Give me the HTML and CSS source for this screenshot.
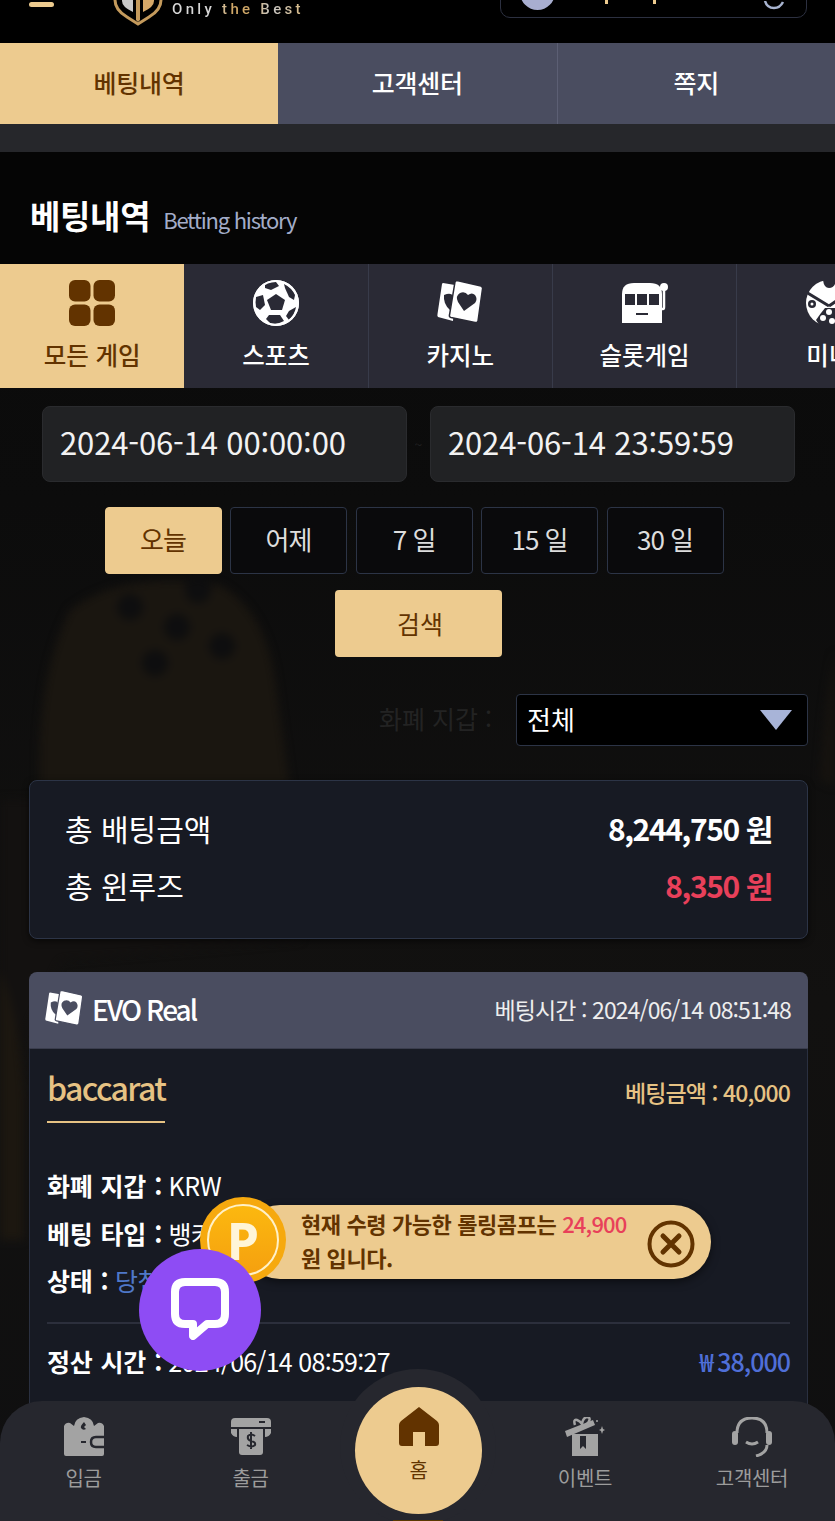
FILE: index.html
```html
<!DOCTYPE html>
<html lang="ko">

<head>
  <meta charset="UTF-8">
  <meta name="viewport" content="width=device-width, initial-scale=1.0">
  <title>베팅내역</title>
  <link rel="stylesheet" href="styles.css">
</head>

<body>
  <div class="page">
    <!-- 배경 주사위 -->
    <svg class="bg-dice" viewBox="0 0 835 1521" aria-hidden="true">
      <path d="M70 610 Q120 570 220 585 Q265 610 275 680 L290 790 L40 790 Q35 680 70 610Z" fill="#1a1610"></path>
      <g fill="#0e0e0f">
        <circle cx="130" cy="607" r="13"></circle>
        <circle cx="198" cy="590" r="13"></circle>
        <circle cx="177" cy="627" r="13"></circle>
        <circle cx="222" cy="646" r="13"></circle>
        <circle cx="155" cy="663" r="13"></circle>
      </g>
      <path d="M845 610 Q825 680 820 780 L845 790Z" fill="#16130f"></path>
      <path d="M-10 800 L290 790 L300 940 L60 960 L-10 1100Z" fill="#131110"></path>
      <path d="M-10 950 Q20 1000 24 1100 L24 1240 L-10 1240Z" fill="#1c1710"></path>
    </svg>

    <header class="top-bar">
      <span class="menu-bar"></span>
      <div class="logo">
        <svg class="logo-mark" viewBox="0 0 50 50" aria-hidden="true">
          <path d="M2 0 V10 Q2 20 14 27 L25 34 L36 27 Q48 20 48 10 V0" fill="none" stroke="#c49a5c" stroke-width="3"></path>
          <path d="M9 0 V11 Q9 17 20 22 V0Z" fill="#c9c9c9"></path>
          <path d="M30 0 V22 Q41 17 41 11 V0Z" fill="#d6a868"></path>
          <path d="M23 0 H27 V30 L25 32 L23 30Z" fill="#c49a5c"></path>
        </svg>
        <span class="logo-text">Only the Best</span>
      </div>
      <div class="wallet">
        <span class="wallet-avatar"></span>
        <span class="wallet-tick"></span>
        <span class="wallet-tick"></span>
        <svg class="wallet-refresh" viewBox="0 0 22 10" aria-hidden="true">
          <path d="M2 0 Q4 7 11 7 Q17 7 20 1" fill="none" stroke="#a8b4d0" stroke-width="2.5"></path>
        </svg>
      </div>
    </header>

    <nav class="main-tabs">
      <a class="main-tab active">베팅내역</a>
      <a class="main-tab">고객센터</a>
      <a class="main-tab">쪽지</a>
    </nav>
    <div class="band"></div>

    <h1 class="title">베팅내역 <small>Betting history</small></h1>

    <div class="game-tabs">
      <a class="game-tab active">
        <svg class="game-icon" viewBox="0 0 46 46" aria-hidden="true">
          <rect x="0" y="0" width="21.5" height="21.5" rx="6" fill="#623300"></rect>
          <rect x="24.5" y="0" width="21.5" height="21.5" rx="6" fill="#623300"></rect>
          <rect x="0" y="24.5" width="21.5" height="21.5" rx="6" fill="#623300"></rect>
          <rect x="24.5" y="24.5" width="21.5" height="21.5" rx="6" fill="#623300"></rect>
        </svg>
        모든 게임
      </a>
      <a class="game-tab">
        <svg class="game-icon" viewBox="0 0 46 46" aria-hidden="true">
          <circle cx="23" cy="23" r="23" fill="#fff"></circle>
          <g fill="#2a2a35">
            <path d="M23 14 L32 20 L29 30 L18 30 L14 20Z"></path>
            <path d="M12 4 Q17 1 23 2 L26 6 L18 10 L12 8Z"></path>
            <path d="M31 4 Q39 8 42 15 L41 20 L36 17 L32 8Z"></path>
            <path d="M3 17 L10 15 L12 25 L7 30 L3 27Q2 22 3 17Z"></path>
            <path d="M16 35 L27 35 L31 41 Q24 45 17 43 L13 39Z"></path>
            <path d="M36 31 L43 27 Q42 34 36 40 L33 36Z"></path>
          </g>
          <circle cx="23" cy="23" r="22" fill="none" stroke="#fff" stroke-width="2"></circle>
        </svg>
        스포츠
      </a>
      <a class="game-tab">
        <svg class="game-icon" viewBox="0 0 46 46" aria-hidden="true">
          <path d="M6 3 L18 5 L16 41 L1 37 Q0 36 0.5 34 L5 4 Q5.5 3 6 3Z" fill="#fff"></path>
          <path d="M7 15 Q14 12 16 16 L13 30 Q6 24 7 15Z" fill="#2a2a35"></path>
          <path d="M20 0.5 L44 6 Q46 7 45.5 9 L41 41 Q40 43 38 42.5 L14 37.5 Q12 37 12.5 35 L18 2 Q18.5 0.5 20 0.5Z" fill="#fff" stroke="#2a2a35" stroke-width="1.5"></path>
          <path d="M27 31 L21 22 Q18 16 23 13 Q28 11 31 15 Q35 12 38 15 Q41 19 38 23Z" fill="#2a2a35"></path>
        </svg>
        카지노
      </a>
      <a class="game-tab">
        <svg class="game-icon" viewBox="0 0 46 46" aria-hidden="true">
          <path d="M0 43 V14 Q0 3 12 3 H28 Q40 3 40 14 V43Z" fill="#fff"></path>
          <rect x="3" y="14" width="10" height="11" fill="#2a2a35"></rect>
          <rect x="15" y="14" width="10" height="11" fill="#2a2a35"></rect>
          <rect x="27" y="14" width="10" height="11" fill="#2a2a35"></rect>
          <rect x="14" y="33" width="12" height="2" fill="#2a2a35"></rect>
          <path d="M39 29 H41 Q42 29 42 27 V10" fill="none" stroke="#fff" stroke-width="2.5"></path>
          <circle cx="42" cy="7" r="4" fill="#fff"></circle>
        </svg>
        슬롯게임
      </a>
      <a class="game-tab">
        <svg class="game-icon" viewBox="0 0 46 46" aria-hidden="true">
          <circle cx="23" cy="23" r="23" fill="#fff"></circle>
          <path d="M17 0 Q18 8 23 8 Q29 8 30 0Z" fill="#2a2a35"></path>
          <path d="M0 12 L23 26 M23 26 L46 10" stroke="#2a2a35" stroke-width="3"></path>
          <circle cx="6" cy="24" r="4" fill="#2a2a35"></circle>
          <circle cx="6" cy="24" r="1.5" fill="#fff"></circle>
          <path d="M10 40 Q14 34 19 28 L31 28 L38 46 L14 46Z" fill="#2a2a35"></path>
          <circle cx="23" cy="32" r="3" fill="#fff"></circle>
          <circle cx="17" cy="38" r="3" fill="#fff"></circle>
          <circle cx="26" cy="41" r="3" fill="#fff"></circle>
        </svg>
        미니
      </a>
    </div>

    <div class="date-row">
      <div class="date-input">2024-06-14 00:00:00</div>
      <span class="date-sep">~</span>
      <div class="date-input">2024-06-14 23:59:59</div>
    </div>

    <div class="quick-row">
      <button class="quick-btn active">오늘</button>
      <button class="quick-btn">어제</button>
      <button class="quick-btn">7 일</button>
      <button class="quick-btn">15 일</button>
      <button class="quick-btn">30 일</button>
    </div>

    <button class="search-btn">검색</button>

    <div class="currency-row">
      <span class="currency-label">화폐 지갑 :</span>
      <div class="currency-select">
        전체
        <svg class="select-arrow" viewBox="0 0 32 20" aria-hidden="true">
          <path d="M0 0 H32 L16 20Z" fill="#a8b4d8"></path>
        </svg>
      </div>
    </div>

    <section class="summary">
      <div class="summary-line"><span>총 배팅금액</span><b>8,244,750 원</b></div>
      <div class="summary-line"><span>총 윈루즈</span><b class="red">8,350 원</b></div>
    </section>

    <section class="bet-card">
      <div class="bet-head">
        <div class="bet-game">
          <svg class="bet-game-icon" viewBox="0 0 46 46" aria-hidden="true">
            <path d="M6 3 L18 5 L16 41 L1 37 Q0 36 0.5 34 L5 4 Q5.5 3 6 3Z" fill="#fff"></path>
            <path d="M7 15 Q14 12 16 16 L13 30 Q6 24 7 15Z" fill="#4a4d60"></path>
            <path d="M20 0.5 L44 6 Q46 7 45.5 9 L41 41 Q40 43 38 42.5 L14 37.5 Q12 37 12.5 35 L18 2 Q18.5 0.5 20 0.5Z" fill="#fff" stroke="#4a4d60" stroke-width="1.5"></path>
            <path d="M27 31 L21 22 Q18 16 23 13 Q28 11 31 15 Q35 12 38 15 Q41 19 38 23Z" fill="#4a4d60"></path>
          </svg>
          EVO Real
        </div>
        <div class="bet-time">베팅시간 : 2024/06/14 08:51:48</div>
      </div>
      <div class="bet-body">
        <div class="bet-top">
          <div class="bet-name">baccarat</div>
          <div class="bet-amount">베팅금액 : 40,000</div>
        </div>
        <ul class="bet-info">
          <li><b>화폐 지갑 :</b> KRW</li>
          <li><b>베팅 타입 :</b> 뱅커</li>
          <li><b>상태 :</b> <span class="blue">당첨</span></li>
        </ul>
        <div class="bet-foot">
          <div><b>정산 시간 :</b> 2024/06/14 08:59:27</div>
          <div class="bet-win">₩ 38,000</div>
        </div>
      </div>
    </section>

    <!-- 롤링콤프 알림 -->
    <div class="comp-notice">
      <span class="coin"><span class="coin-face">P</span></span>
      <p>현재 수령 가능한 롤링콤프는 <em>24,900</em> 원 입니다.</p>
      <svg class="comp-close" viewBox="0 0 48 48" aria-hidden="true">
        <circle cx="24" cy="24" r="21.5" fill="none" stroke="#623300" stroke-width="4"></circle>
        <path d="M16 16 L32 32 M32 16 L16 32" stroke="#623300" stroke-width="5" stroke-linecap="round"></path>
      </svg>
    </div>

    <!-- 채팅 버튼 -->
    <button class="chat-btn" aria-label="채팅">
      <svg viewBox="0 0 58 62" aria-hidden="true">
        <path d="M14 4 H44 Q54 4 54 14 V36 Q54 46 44 46 H36 L22 58 V46 H14 Q4 46 4 36 V14 Q4 4 14 4Z" fill="none" stroke="#fff" stroke-width="8" stroke-linejoin="round"></path>
      </svg>
    </button>

    <nav class="bottom-nav">
      <a class="nav-item">
        <svg class="nav-icon" viewBox="0 0 40 40" aria-hidden="true">
          <path d="M0 9 Q2 5 6 6 L10 9 Q11 1 20 0 Q29 1 30 9 L34 6 Q38 5 40 9 V37 Q40 39 38 39 H2 Q0 39 0 37Z" fill="#a3a3a3"></path>
          <path d="M41 20 H32 Q27 20 27 25 Q27 30 32 30 H41" fill="none" stroke="#26272e" stroke-width="2.5"></path>
          <rect x="17" y="24" width="5" height="2" fill="#26272e"></rect>
          <path d="M20 5 Q16 9 17 11 Q19 14 22 12 L20 10 L22 8Z" fill="#26272e"></path>
        </svg>
        입금
      </a>
      <a class="nav-item">
        <svg class="nav-icon" viewBox="0 0 40 40" aria-hidden="true">
          <path d="M0 5 Q0 1 4 1 H36 Q40 1 40 5 V10 H0Z" fill="#a3a3a3"></path>
          <rect x="28" y="4" width="6" height="2" fill="#26272e"></rect>
          <path d="M0 12 H6 V20 Q2 20 0 16Z M40 12 H34 V20 Q38 20 40 16Z" fill="#a3a3a3"></path>
          <path d="M8 12 H32 V35 Q32 38 29 38 H11 Q8 38 8 35Z" fill="#a3a3a3"></path>
          <path d="M24 19 Q20 16 17 19 Q16 23 20 24 Q25 25 24 28 Q21 31 16 28 M20 15 V32" fill="none" stroke="#26272e" stroke-width="2"></path>
        </svg>
        출금
      </a>
      <a class="nav-item home">
        <svg class="nav-icon" viewBox="0 0 40 40" aria-hidden="true">
          <path d="M20 0 L38 14 Q40 16 40 18 V36 Q40 39 37 39 H26 V25 H14 V39 H3 Q0 39 0 36 V18 Q0 16 2 14Z" fill="#623300"></path>
        </svg>
        홈
      </a>
      <a class="nav-item">
        <svg class="nav-icon" viewBox="0 0 40 40" aria-hidden="true">
          <path d="M7 17 H33 V39 H7Z" fill="#a3a3a3"></path>
          <path d="M0 14 L28 3 L30 8 L2 20Z" fill="#a3a3a3"></path>
          <path d="M10 8 Q8 2 12 3 Q15 4 17 7 Q18 0 23 0 Q27 2 21 8" fill="none" stroke="#a3a3a3" stroke-width="2.5"></path>
          <path d="M15 19 V32 L18 29 L21 32 V19" fill="#26272e"></path>
          <path d="M37 9 L38 12 L40 13 L38 14 L37 17 L36 14 L34 13 L36 12Z" fill="#a3a3a3"></path>
          <circle cx="32" cy="4" r="1" fill="#a3a3a3"></circle>
        </svg>
        이벤트
      </a>
      <a class="nav-item">
        <svg class="nav-icon" viewBox="0 0 40 40" aria-hidden="true">
          <path d="M5 16 Q5 1 20 1 Q35 1 35 16" fill="none" stroke="#a3a3a3" stroke-width="3"></path>
          <rect x="0" y="14" width="6" height="14" rx="3" fill="#a3a3a3"></rect>
          <rect x="34" y="14" width="6" height="14" rx="3" fill="#a3a3a3"></rect>
          <path d="M35 28 Q35 36 24 39" fill="none" stroke="#a3a3a3" stroke-width="3"></path>
          <path d="M14 25 Q20 29 26 25" fill="none" stroke="#a3a3a3" stroke-width="3"></path>
        </svg>
        고객센터
      </a>
      <span class="nav-mark"></span>
    </nav>
  </div>
</body>

</html>
```

FILE: styles.css
```css
* {
  box-sizing: border-box;
}

body {
  margin: 0;
  background: #0b0b0c;
  font-family: "Noto Sans CJK KR", "Noto Sans", sans-serif;
  color: #fff;
}

.page {
  position: relative;
  width: 835px;
  height: 1521px;
  overflow: hidden;
  display: flex;
  flex-direction: column;
  background: linear-gradient(#090909 0, #0c0c0c 500px, #121110 1000px, #0f0f10 1521px);
}

.bg-dice {
  position: absolute;
  top: 0;
  left: 0;
  width: 835px;
  height: 1521px;
  filter: blur(4px);
}

/* 상단 헤더 - 위쪽은 스크롤로 잘린 상태 */
.top-bar {
  position: relative;
  flex: none;
  height: 43px;
  background: #000;
  overflow: hidden;
}

.menu-bar {
  position: absolute;
  top: 2px;
  left: 29px;
  width: 25px;
  height: 5px;
  border-radius: 3px;
  background: #edcb8f;
}

.logo {
  position: absolute;
  top: 0;
  left: 113px;
  display: flex;
  align-items: flex-start;
}

.logo-mark {
  width: 50px;
  height: 50px;
  margin-top: -10px;
}

.logo-text {
  margin: -1px 0 0 9px;
  font-family: "Roboto", sans-serif;
  font-size: 15px;
  line-height: 20px;
  font-weight: 500;
  letter-spacing: 3.3px;
  color: transparent;
  background: linear-gradient(90deg, #d8d8d8 0, #d8d8d8 30%, #d0a868 45%, #d0a868 60%, #c8c8c8 75%, #d8b880 100%);
  background-clip: text;
  -webkit-background-clip: text;
}

.wallet {
  position: absolute;
  top: -30px;
  left: 500px;
  width: 307px;
  height: 48px;
  border: 1.5px solid #2c3040;
  border-radius: 10px;
}

.wallet-avatar {
  position: absolute;
  left: 19px;
  top: 4px;
  width: 35px;
  height: 35px;
  border-radius: 50%;
  background: #a8aed0;
}

.wallet-tick {
  position: absolute;
  left: 104px;
  top: 27px;
  width: 3px;
  height: 6px;
  background: #edcb8f;
}

.wallet-tick + .wallet-tick {
  left: 152px;
}

.wallet-refresh {
  position: absolute;
  left: 262px;
  top: 30px;
  width: 22px;
  height: 10px;
}

/* 상단 탭 */
.main-tabs {
  position: relative;
  flex: none;
  height: 81px;
  display: grid;
  grid-template-columns: 278px 279.5px 1fr;
  background: #4a4d60;
}

.main-tab {
  display: flex;
  align-items: center;
  justify-content: center;
  padding-bottom: 4px;
  font-size: 25px;
  font-weight: 500;
  letter-spacing: -0.2px;
  color: #fff;
  border-right: 1px solid #5c5f74;
}

.main-tab.active {
  background: #edcb8f;
  color: #623300;
  border-right: 0;
}

.main-tab:last-child {
  border-right: 0;
}

.band {
  position: relative;
  flex: none;
  height: 28px;
  background: #26272b;
}

.title {
  position: relative;
  flex: none;
  height: 112px;
  margin: 0;
  padding: 41px 0 0 30px;
  font-size: 33px;
  line-height: 44px;
  font-weight: 700;
  letter-spacing: -0.3px;
  background: #050505;
}

.title small {
  margin-left: 4px;
  font-size: 22px;
  font-weight: 400;
  letter-spacing: -1.25px;
  color: #a3adc9;
}

/* 게임 종류 탭 */
.game-tabs {
  position: relative;
  flex: none;
  height: 124px;
  display: flex;
  overflow: hidden;
  background: #2a2a35;
}

.game-tab {
  flex: none;
  width: 184.3px;
  display: flex;
  flex-direction: column;
  align-items: center;
  padding-top: 16px;
  font-size: 24.5px;
  line-height: 34px;
  font-weight: 500;
  white-space: nowrap;
  border-right: 1px solid #383b4a;
}

.game-tab.active {
  background: #edcb8f;
  color: #623300;
  border-right: 0;
}

.game-icon {
  width: 46px;
  height: 46px;
  margin-bottom: 12px;
}

/* 날짜 */
.date-row {
  position: relative;
  flex: none;
  display: flex;
  align-items: center;
  margin: 18px 0 0 42px;
  width: 753px;
  justify-content: space-between;
}

.date-input {
  width: 365px;
  height: 76px;
  padding-left: 17px;
  font-size: 31px;
  line-height: 70px;
  letter-spacing: -0.14px;
  color: #f2f2f2;
  background: #212224;
  border: 1px solid #2a2b2e;
  border-radius: 8px;
}

.date-sep {
  font-size: 14px;
  color: #222;
}

.quick-row {
  position: relative;
  flex: none;
  display: flex;
  justify-content: center;
  gap: 8.5px;
  margin: 25px 7px 0 0;
}

.quick-btn {
  width: 117px;
  height: 67px;
  padding: 0 0 4px;
  font-family: inherit;
  font-size: 26px;
  letter-spacing: -1px;
  color: #ddd;
  background: #0a0a0c;
  border: 1.5px solid #2c3446;
  border-radius: 4px;
}

.quick-btn.active {
  color: #623300;
  background: #edcb8f;
  border-color: #edcb8f;
}

.search-btn {
  position: relative;
  flex: none;
  align-self: center;
  width: 167px;
  height: 67px;
  margin: 16px 0 0 2px;
  padding: 0 0 2px 3px;
  font-family: inherit;
  font-size: 25px;
  color: #623300;
  background: #edcb8f;
  border: 0;
  border-radius: 4px;
}

.currency-row {
  position: relative;
  flex: none;
  display: flex;
  align-items: center;
  justify-content: flex-end;
  gap: 24px;
  margin: 37px 27px 0 0;
}

.currency-label {
  padding-bottom: 5px;
  font-size: 25px;
  color: #232323;
}

.currency-select {
  display: flex;
  align-items: center;
  justify-content: space-between;
  width: 292px;
  height: 52px;
  padding: 0 15px 4px 10px;
  font-size: 26px;
  background: #000;
  border: 1.5px solid #2c3446;
  border-radius: 4px;
}

.select-arrow {
  width: 32px;
  height: 20px;
  margin-top: 4px;
}

/* 합계 */
.summary {
  position: relative;
  flex: none;
  height: 159px;
  margin: 34px 27px 0 29px;
  padding: 19px 35px 0;
  background: #171a23;
  border: 1.5px solid #2c3446;
  border-radius: 8px;
  box-shadow: 0 2px 6px rgba(0, 0, 0, 0.6);
}

.summary-line {
  display: flex;
  justify-content: space-between;
  height: 57px;
  font-size: 30px;
  line-height: 57px;
}

.summary-line b {
  font-weight: 700;
  letter-spacing: -1.4px;
}

.red {
  color: #e8405a;
}

/* 베팅 카드 */
.bet-card {
  position: relative;
  flex: none;
  margin: 33px 27px 0 29px;
}

.bet-head {
  display: flex;
  align-items: center;
  justify-content: space-between;
  height: 77px;
  padding: 0 17px 3px 16px;
  background: #4a4d60;
  border-radius: 8px 8px 0 0;
  border-bottom: 1.5px solid #3a3d4d;
}

.bet-game {
  display: flex;
  align-items: center;
  gap: 9px;
  font-size: 28px;
  font-weight: 500;
  letter-spacing: -2px;
}

.bet-game-icon {
  width: 38px;
  height: 38px;
}

.bet-time {
  font-size: 23px;
  letter-spacing: -0.9px;
  color: #eee;
}

.bet-body {
  height: 400px;
  padding: 0 17px;
  background: #171a23;
  border: 1px solid #2a3040;
  border-top: 0;
}

.bet-top {
  display: flex;
  justify-content: space-between;
  align-items: flex-start;
}

.bet-name {
  margin-top: 14px;
  width: 118px;
  height: 60px;
  font-size: 32px;
  line-height: 48px;
  font-weight: 500;
  letter-spacing: -1.6px;
  color: #e6c283;
  border-bottom: 2px solid #e6c283;
}

.bet-amount {
  margin-top: 23px;
  font-size: 23px;
  line-height: 40px;
  font-weight: 500;
  letter-spacing: -0.9px;
  color: #e6c283;
}

.bet-info {
  margin: 39px 0 0;
  padding: 0;
  list-style: none;
  font-size: 25px;
  line-height: 47.5px;
  letter-spacing: -0.5px;
}

.bet-info b,
.bet-foot b {
  font-weight: 700;
  letter-spacing: -0.3px;
  word-spacing: 1.5px;
}

.blue {
  color: #4f78c8;
}

.bet-foot {
  display: flex;
  justify-content: space-between;
  margin-top: 17px;
  padding-top: 14px;
  font-size: 25px;
  line-height: 47px;
  letter-spacing: -0.7px;
  border-top: 2px solid #2c2f3c;
}

.bet-win {
  font-weight: 500;
  letter-spacing: -1px;
  color: #4f6fd8;
}

/* 떠 있는 요소 */
.comp-notice {
  position: absolute;
  top: 1205px;
  left: 243px;
  width: 468px;
  height: 74px;
  display: flex;
  align-items: center;
  padding: 0 0 4px 58px;
  background: #edcb8f;
  border-radius: 37px;
  box-shadow: 0 3px 8px rgba(0, 0, 0, 0.5);
}

.comp-notice p {
  width: 330px;
  margin: 0;
  font-size: 22px;
  line-height: 34px;
  font-weight: 700;
  letter-spacing: -0.4px;
  color: #623300;
}

.comp-notice em {
  font-style: normal;
  font-weight: 500;
  color: #e8405a;
  letter-spacing: -0.8px;
}

.coin {
  position: absolute;
  top: -8px;
  left: -43px;
  width: 86px;
  height: 86px;
  display: flex;
  align-items: center;
  justify-content: center;
  border-radius: 50%;
  background: #f6a90e;
}

.coin-face {
  width: 72px;
  height: 72px;
  text-align: center;
  font-family: "Noto Sans", sans-serif;
  font-size: 52px;
  line-height: 68px;
  font-weight: 700;
  color: #fff5d8;
  background: linear-gradient(#fcb80f, #f5a00f);
  border: 2.5px solid #fff1c8;
  border-radius: 50%;
}

.comp-close {
  position: absolute;
  right: 16px;
  top: 15px;
  width: 48px;
  height: 48px;
}

.chat-btn {
  position: absolute;
  top: 1249px;
  left: 139px;
  width: 122px;
  height: 122px;
  display: flex;
  align-items: center;
  justify-content: center;
  padding: 0 0 2px;
  background: #8e4cf4;
  border: 0;
  border-radius: 50%;
}

.chat-btn svg {
  width: 58px;
  height: 62px;
}

/* 하단 메뉴 */
.bottom-nav {
  position: absolute;
  left: 0;
  right: 0;
  top: 1401px;
  height: 120px;
  display: grid;
  grid-template-columns: 167px 167px 167px 168px 166px;
  background: #26272e;
  border-radius: 42px 42px 0 0;
}

.bottom-nav::before {
  content: "";
  position: absolute;
  top: -32px;
  left: 340px;
  width: 156px;
  height: 156px;
  border-radius: 50%;
  background: #26272e;
}

.nav-item {
  position: relative;
  display: flex;
  flex-direction: column;
  align-items: center;
  padding-top: 16px;
  font-size: 20px;
  line-height: 28px;
  letter-spacing: -0.3px;
  color: #9c9c9c;
}

.nav-item.home {
  width: 127px;
  height: 127px;
  margin: -14px 0 0 21px;
  padding-top: 20px;
  border-radius: 50%;
  background: #edcb8f;
  color: #623300;
}

.nav-icon {
  width: 40px;
  height: 40px;
  margin-bottom: 7px;
}

.nav-item.home .nav-icon {
  margin-bottom: 9px;
}

.nav-mark {
  position: absolute;
  left: 393px;
  bottom: 0;
  width: 50px;
  height: 1px;
  background: #5a3800;
}
```
